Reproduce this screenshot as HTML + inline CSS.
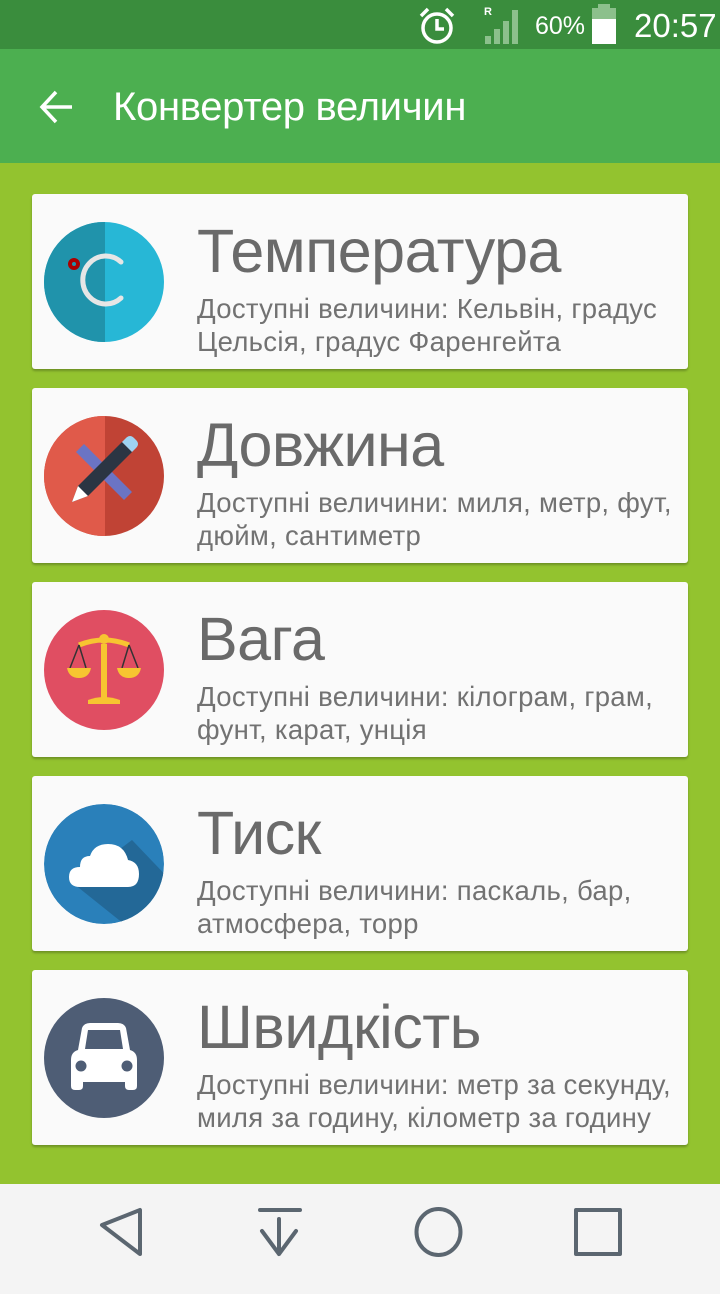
<!DOCTYPE html>
<html><head><meta charset="utf-8"><style>
*{margin:0;padding:0;box-sizing:border-box}
body{width:720px;height:1280px;overflow:hidden;background:#93c32f;font-family:"Liberation Sans",sans-serif;position:relative}
.sb{position:absolute;top:0;left:0;width:720px;height:49px;background:#3a8d3d;color:#fff}
.ab{position:absolute;top:49px;left:0;width:720px;height:114px;background:#4caf50;color:#fff}
.ab .t{position:absolute;left:113px;top:36px;font-size:40px;letter-spacing:-0.3px}
.card{position:absolute;left:32px;width:656px;height:175px;background:#fafafa;border-radius:3px;box-shadow:0 2px 2px rgba(0,0,0,.25)}
.card svg{position:absolute;left:12px;top:28px}
.card h2{position:absolute;left:165px;top:22px;font-weight:normal;font-size:61px;color:#6a6a6a;letter-spacing:-0.5px}
.card p{position:absolute;left:165px;top:98px;font-size:27.5px;line-height:33px;color:#727272;letter-spacing:0.3px;width:485px}
.nav{position:absolute;top:1184px;left:0;width:720px;height:110px;background:#f4f4f4}
</style></head><body>
<div class="sb">
<svg style="position:absolute;left:416px;top:6px" width="42" height="40" viewBox="0 0 42 40"><circle cx="21" cy="22" r="14" fill="none" stroke="#fff" stroke-width="3.5"/><path d="M21 13v10h7" fill="none" stroke="#fff" stroke-width="3.5"/><path d="M5 10 L12 3 M37 10 L30 3" stroke="#fff" stroke-width="3.5"/></svg>
<div style="position:absolute;left:484px;top:6px;font-size:11px;font-weight:bold">R</div>
<svg style="position:absolute;left:485px;top:8px" width="40" height="36"><rect x="0" y="28" width="6" height="8" fill="#8cc08c"/><rect x="9" y="21" width="6" height="15" fill="#8cc08c"/><rect x="18" y="13" width="6" height="23" fill="#8cc08c"/><rect x="27" y="2" width="6" height="34" fill="#8cc08c"/></svg>
<div style="position:absolute;left:535px;top:12px;font-size:25px">60%</div>
<div style="position:absolute;left:592px;top:8px;width:24px;height:36px;background:#8cc08c"></div>
<div style="position:absolute;left:598px;top:4px;width:12px;height:5px;background:#8cc08c"></div>
<div style="position:absolute;left:592px;top:19px;width:24px;height:25px;background:#fff"></div>
<div style="position:absolute;left:634px;top:7px;font-size:33px">20:57</div>
</div>
<div class="ab">
<svg style="position:absolute;left:38px;top:40px" width="36" height="36" viewBox="0 0 36 36"><path d="M34 18H4M18 3L4 18l14 15" fill="none" stroke="#fff" stroke-width="3.5"/></svg>
<div class="t">Конвертер величин</div>
</div>

<div class="card" style="top:194px">
<svg width="120" height="120" viewBox="0 0 120 120"><clipPath id="c1"><circle cx="60" cy="60" r="60"/></clipPath><g clip-path="url(#c1)"><rect width="120" height="120" fill="#27b7d6"/><rect width="61" height="120" fill="#2093ab"/></g><circle cx="30" cy="42" r="4" fill="none" stroke="#a00" stroke-width="4"/><path d="M77 40 A23 24 0 1 0 77 76" fill="none" stroke="#e6e6e6" stroke-width="5" stroke-linecap="round"/></svg>
<h2>Температура</h2><p>Доступні величини: Кельвін, градус Цельсія, градус Фаренгейта</p></div>

<div class="card" style="top:388px">
<svg width="120" height="120" viewBox="0 0 120 120"><clipPath id="c2"><circle cx="60" cy="60" r="60"/></clipPath><g clip-path="url(#c2)"><rect width="120" height="120" fill="#c04335"/><rect width="61" height="120" fill="#e05a4a"/></g><path d="M32 36 L40 28 L88 76 L80 84Z" fill="#6b74c4"/><path d="M28 86 L34 70 L78 26 L88 36 L44 80Z" fill="#2b3543"/><path d="M28 86 L34 70 L44 80Z" fill="#fff"/><path d="M78 26 L82 22 Q86 18 90 22 L92 24 Q96 28 92 32 L88 36Z" fill="#9fd3f2"/></svg>
<h2>Довжина</h2><p>Доступні величини: миля, метр, фут, дюйм, сантиметр</p></div>

<div class="card" style="top:582px">
<svg width="120" height="120" viewBox="0 0 120 120"><circle cx="60" cy="60" r="60" fill="#e04e62"/><path d="M35 35 Q60 25 85 35" fill="none" stroke="#f7c531" stroke-width="5"/><path d="M57 34h6v55h-6z" fill="#f7c531"/><path d="M44 90 Q60 84 76 90 v4 H44z" fill="#f7c531"/><circle cx="60" cy="29" r="5" fill="#f7c531"/><path d="M35 35 L26 58 M35 35 L42 58 M85 35 L78 58 M85 35 L94 58" stroke="#333" stroke-width="1.5"/><path d="M23 58h24 q-2 10 -12 10 q-10 0 -12 -10z M73 58h24 q-2 10 -12 10 q-10 0 -12 -10z" fill="#f7c531"/></svg>
<h2>Вага</h2><p>Доступні величини: кілограм, грам, фунт, карат, унція</p></div>

<div class="card" style="top:776px">
<svg width="120" height="120" viewBox="0 0 120 120"><clipPath id="c4"><circle cx="60" cy="60" r="60"/></clipPath><g clip-path="url(#c4)"><circle cx="60" cy="60" r="60" fill="#2a80ba"/><path d="M30 80 L88 36 L130 80 L120 120 L80 120Z" fill="#236897"/></g><path d="M36 83 Q25 83 25 73 Q25 63 36 63 Q36 52 46 52 Q50 40 64 40 Q80 40 84 56 Q95 58 95 70 Q95 83 84 83Z" fill="#fff"/></svg>
<h2>Тиск</h2><p>Доступні величини: паскаль, бар, атмосфера, торр</p></div>

<div class="card" style="top:970px">
<svg width="120" height="120" viewBox="0 0 120 120"><circle cx="60" cy="60" r="60" fill="#4e5d75"/><path d="M38 30 Q40 25 46 25 H74 Q80 25 82 30 L86 52 Q93 54 93 62 V88 Q93 92 89 92 H85 Q81 92 81 88 V84 H39 V88 Q39 92 35 92 H31 Q27 92 27 88 V62 Q27 54 34 52Z" fill="#fff"/><path d="M44 32 H76 L79 51 H41Z" fill="#4e5d75"/><circle cx="37" cy="68" r="5.5" fill="#4e5d75"/><circle cx="83" cy="68" r="5.5" fill="#4e5d75"/></svg>
<h2>Швидкість</h2><p>Доступні величини: метр за секунду, миля за годину, кілометр за годину</p></div>

<div class="nav">
<svg width="720" height="96" viewBox="0 0 720 96" fill="none" stroke="#5b6670" stroke-width="4" stroke-linejoin="round" stroke-linecap="round">
<path d="M140 26 V70 L102 41 Z"/>
<path d="M260 26 H300 M279 35 V70 M262 47 L279 70 L296 47"/>
<ellipse cx="438.5" cy="48" rx="22" ry="23"/>
<rect x="576" y="26" width="44" height="44"/>
</svg>
</div>
</body></html>
